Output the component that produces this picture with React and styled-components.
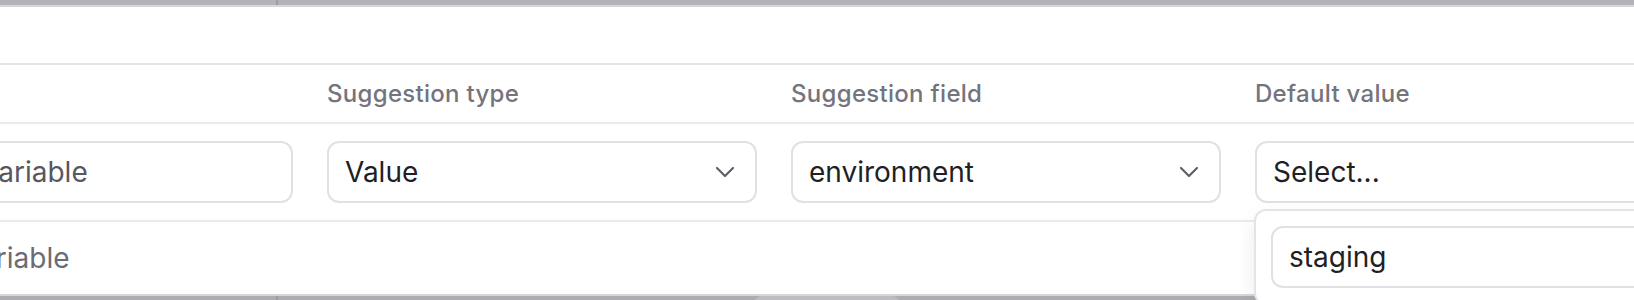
import React from 'react';
import styled, { createGlobalStyle } from 'styled-components';
import { ChevronDown } from 'lucide-react';

const GlobalStyle = createGlobalStyle`
  html, body {
    margin: 0;
    padding: 0;
    background: #adacb1;
  }
  body {
    font-family: Inter, "Noto Sans", sans-serif;
    -webkit-font-smoothing: antialiased;
  }
`;

const Screen = styled.div`
  position: relative;
  width: 1634px;
  height: 300px;
  overflow: hidden;
`;

/* the page behind the dialog, already dimmed by the overlay */
const Backdrop = styled.div`
  display: grid;
  grid-template-columns: 278px 1fr;
  grid-template-rows: 60px 1fr;
  height: 100%;
  background: #adacb1;
`;

const PageCell = styled.div`
  background: ${p => (p.$top ? '#b4b3b8' : '#adacb1')};
  border-right: ${p => (p.$side ? '2px solid #9d9ca1' : 'none')};
  padding: ${p => p.$pad || '0'};
`;

const GhostButton = styled.div`
  display: inline-flex;
  align-items: center;
  gap: 10px;
  width: 146px;
  height: 44px;
  box-sizing: border-box;
  padding: 8px 14px;
  background: #bdbdc1;
  border-radius: 8px;
  color: #55545a;
  font-size: 26px;
`;

const Dialog = styled.div`
  position: absolute;
  top: 5px;
  left: -188px;
  width: 2100px;
  height: 291px;
  box-sizing: border-box;
  display: flex;
  flex-direction: column;
  background: #fff;
  border: 2px solid #d7d7db;
  border-radius: 16px;
`;

const DialogHeader = styled.div`
  height: 56px;
  flex-shrink: 0;
  border-bottom: 2px solid #e6e6e9;
`;

const Columns = styled.div`
  display: grid;
  grid-template-columns: repeat(4, 430px);
  column-gap: 34px;
  align-items: center;
  padding: ${p => p.$padY || '0'} 49px;
  height: ${p => p.$height || 'auto'};
  flex-shrink: 0;
  border-bottom: ${p => (p.$last ? 'none' : '2px solid #ebebee')};
`;

const Label = styled.div`
  font-size: 24px;
  font-weight: 500;
  color: #74747d;
  letter-spacing: 0.3px;
`;

const Cell = styled.div`
  position: relative;
`;

const Field = styled.div`
  display: flex;
  align-items: center;
  justify-content: space-between;
  height: 62px;
  box-sizing: border-box;
  padding: 0 14px 0 16px;
  border: 2px solid #dfe1e6;
  border-radius: 12px;
  background: #fff;
  font-size: 28px;
  color: ${p => (p.$muted ? '#57575f' : '#1f1f24')};
  white-space: nowrap;
`;

const Chevron = styled(ChevronDown)`
  flex-shrink: 0;
  color: #5f5f68;
`;

const Popover = styled.div`
  position: absolute;
  top: calc(100% + 6px);
  left: -1px;
  width: 430px;
  box-sizing: border-box;
  padding: 15px;
  background: #fff;
  border: 2px solid #e4e4e7;
  border-radius: 12px;
  box-shadow: 0 8px 20px rgba(0, 0, 0, 0.08);
`;

const FootText = styled.div`
  font-size: 28px;
  color: #6b6b74;
  padding-left: ${p => p.$indent || '0'};
  white-space: nowrap;
`;

const Select = ({ value, muted, open, children }) => (
  <Cell>
    <Field $muted={muted}>
      <span>{value}</span>
      {!open && <Chevron size={32} strokeWidth={1.6} />}
    </Field>
    {children}
  </Cell>
);

function App() {
  return (
    <Screen>
      <GlobalStyle />
      <Backdrop>
        <PageCell $top $side />
        <PageCell $top />
        <PageCell $side />
        <PageCell $pad="236px 0 0 476px">
          <GhostButton>Schedule</GhostButton>
        </PageCell>
      </Backdrop>

      <Dialog>
        <DialogHeader />
        <Columns $height="57px">
          <Label>Variable</Label>
          <Label>Suggestion type</Label>
          <Label>Suggestion field</Label>
          <Label>Default value</Label>
        </Columns>
        <Columns $padY="17px">
          <Cell>
            <Field $muted>
              <span>Shared variable</span>
            </Field>
          </Cell>
          <Select value="Value" />
          <Select value="environment" />
          <Select value="Select..." open>
            <Popover>
              <Field>
                <span>staging</span>
              </Field>
            </Popover>
          </Select>
        </Columns>
        <Columns $height="72px" $last>
          <FootText $indent="40px">Add variable</FootText>
        </Columns>
      </Dialog>
    </Screen>
  );
}

export default App;
